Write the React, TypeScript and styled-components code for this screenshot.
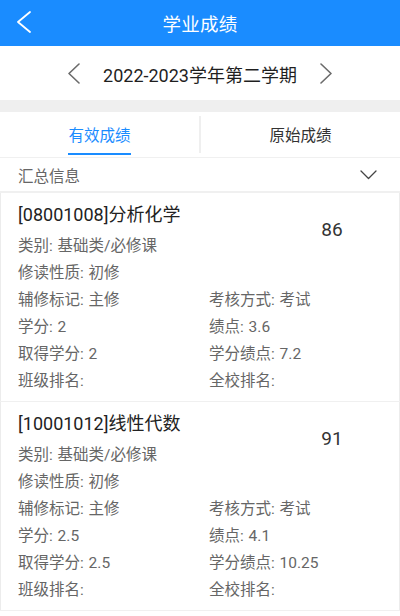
import React from "react";
import styled, { createGlobalStyle } from "styled-components";

const GlobalStyle = createGlobalStyle`
  html, body {
    margin: 0;
    padding: 0;
    background: #ffffff;
  }
  body {
    font-family: Roboto, "Noto Sans CJK SC", "Noto Sans", sans-serif;
    -webkit-font-smoothing: antialiased;
  }
  * {
    box-sizing: border-box;
  }
`;

interface Course {
  code: string;
  name: string;
  score: string;
  category: string;
  nature: string;
  minor: string;
  exam: string;
  credit: string;
  gpa: string;
  earned: string;
  creditGpa: string;
}

const courses: Course[] = [
  {
    code: "08001008",
    name: "分析化学",
    score: "86",
    category: "基础类/必修课",
    nature: "初修",
    minor: "主修",
    exam: "考试",
    credit: "2",
    gpa: "3.6",
    earned: "2",
    creditGpa: "7.2",
  },
  {
    code: "10001012",
    name: "线性代数",
    score: "91",
    category: "基础类/必修课",
    nature: "初修",
    minor: "主修",
    exam: "考试",
    credit: "2.5",
    gpa: "4.1",
    earned: "2.5",
    creditGpa: "10.25",
  },
];

const ChevronLeft: React.FC<{ color: string; width: number; height: number; stroke?: number }> = ({
  color,
  width,
  height,
  stroke = 1.6,
}) => (
  <svg width={width} height={height} viewBox={`0 0 ${width} ${height}`} fill="none">
    <polyline
      points={`${width - 1},1 1,${height / 2} ${width - 1},${height - 1}`}
      stroke={color}
      strokeWidth={stroke}
      strokeLinecap="round"
      strokeLinejoin="round"
    />
  </svg>
);

const ChevronRight: React.FC<{ color: string; width: number; height: number; stroke?: number }> = ({
  color,
  width,
  height,
  stroke = 1.6,
}) => (
  <svg width={width} height={height} viewBox={`0 0 ${width} ${height}`} fill="none">
    <polyline
      points={`1,1 ${width - 1},${height / 2} 1,${height - 1}`}
      stroke={color}
      strokeWidth={stroke}
      strokeLinecap="round"
      strokeLinejoin="round"
    />
  </svg>
);

const ChevronDown: React.FC = () => (
  <svg width="17" height="10" viewBox="0 0 17 10" fill="none">
    <polyline
      points="1,1 8.5,8.5 16,1"
      stroke="#444"
      strokeWidth="1.3"
      strokeLinecap="round"
      strokeLinejoin="round"
    />
  </svg>
);

const App: React.FC = () => {
  const [tab, setTab] = React.useState(0);

  return (
    <Page>
      <GlobalStyle />
      <Header>
        <BackButton>
          <ChevronLeft color="#ffffff" width={14} height={22} stroke={1.8} />
        </BackButton>
        <HeaderTitle>学业成绩</HeaderTitle>
      </Header>

      <TermBar>
        <TermArrow>
          <ChevronLeft color="#6b6b6b" width={12} height={21} />
        </TermArrow>
        <TermText>2022-2023学年第二学期</TermText>
        <TermArrow>
          <ChevronRight color="#6b6b6b" width={12} height={21} />
        </TermArrow>
      </TermBar>

      <Band />

      <Tabs>
        <Tab onClick={() => setTab(0)}>
          <TabLabel $active={tab === 0}>有效成绩</TabLabel>
        </Tab>
        <TabDivider />
        <Tab onClick={() => setTab(1)}>
          <TabLabel $active={tab === 1}>原始成绩</TabLabel>
        </Tab>
      </Tabs>

      <Summary>
        <SummaryText>汇总信息</SummaryText>
        <ChevronDown />
      </Summary>

      <CardList>
        {courses.map((c) => (
          <Card key={c.code}>
            <CardTop>
              <TopInfo>
                <CourseTitle>
                  [{c.code}]{c.name}
                </CourseTitle>
                <Row>类别: {c.category}</Row>
                <Row>修读性质: {c.nature}</Row>
              </TopInfo>
              <Score>{c.score}</Score>
            </CardTop>
            <InfoGrid>
              <Row>辅修标记: {c.minor}</Row>
              <Row>考核方式: {c.exam}</Row>
              <Row>学分: {c.credit}</Row>
              <Row>绩点: {c.gpa}</Row>
              <Row>取得学分: {c.earned}</Row>
              <Row>学分绩点: {c.creditGpa}</Row>
              <Row>班级排名:</Row>
              <Row>全校排名:</Row>
            </InfoGrid>
          </Card>
        ))}
      </CardList>
    </Page>
  );
};

const Page = styled.div`
  width: 400px;
  min-height: 616px;
  background: #ffffff;
`;

const Header = styled.header`
  height: 46px;
  background: #1a8cff;
  display: flex;
  align-items: center;
  justify-content: center;
  position: relative;
`;

const BackButton = styled.div`
  position: absolute;
  left: 17px;
  top: 11px;
  display: flex;
`;

const HeaderTitle = styled.h1`
  margin: 0;
  font-size: 18.5px;
  font-weight: 400;
  color: #ffffff;
  letter-spacing: 0.3px;
`;

const TermBar = styled.div`
  height: 54px;
  display: flex;
  align-items: center;
  justify-content: center;
  gap: 23px;
`;

const TermArrow = styled.div`
  display: flex;
  padding-top: 1px;
`;

const TermText = styled.div`
  font-size: 18px;
  color: #1f1f1f;
  padding-top: 1px;
`;

const Band = styled.div`
  height: 12px;
  background: #efefef;
`;

const Tabs = styled.div`
  height: 46px;
  display: flex;
  align-items: stretch;
  border-bottom: 1px solid #f0f0f0;
`;

const Tab = styled.div`
  flex: 1;
  display: flex;
  justify-content: center;
  cursor: pointer;
`;

const TabLabel = styled.span<{ $active: boolean }>`
  display: flex;
  align-items: center;
  font-size: 15.5px;
  color: ${(p) => (p.$active ? "#1a8cff" : "#333333")};
  border-bottom: 2px solid ${(p) => (p.$active ? "#1a8cff" : "transparent")};
  padding-top: 3px;
  margin-bottom: 2px;
`;

const TabDivider = styled.div`
  width: 2px;
  margin: 4px 0 4px;
  background: #efefef;
`;

const Summary = styled.div`
  height: 33px;
  display: flex;
  align-items: center;
  justify-content: space-between;
  padding: 0 23px 0 18px;
`;

const SummaryText = styled.span`
  font-size: 15.5px;
  color: #666666;
`;

const CardList = styled.div`
  display: flex;
  flex-direction: column;
  gap: 1px;
  padding-top: 2px;
  background: #f0f0f0;
  padding-bottom: 1px;
`;

const Card = styled.div`
  background: #ffffff;
  border-left: 1px solid #ececec;
  border-right: 1px solid #ececec;
  padding: 8px 0 6px 17px;
`;

const CardTop = styled.div`
  display: flex;
  align-items: flex-start;
`;

const TopInfo = styled.div`
  flex: 1;
  display: flex;
  flex-direction: column;
`;

const CourseTitle = styled.div`
  font-size: 18px;
  line-height: 28px;
  color: #222222;
  margin-bottom: 4px;
`;

const Score = styled.div`
  width: 60px;
  margin: 15px 37px 0 0;
  text-align: center;
  font-size: 19px;
  line-height: 28px;
  color: #333333;
`;

const InfoGrid = styled.div`
  display: grid;
  grid-template-columns: 191px 1fr;
`;

const Row = styled.div`
  font-size: 15.5px;
  line-height: 27px;
  color: #666666;
  white-space: nowrap;
  word-spacing: 1px;
`;

export default App;
